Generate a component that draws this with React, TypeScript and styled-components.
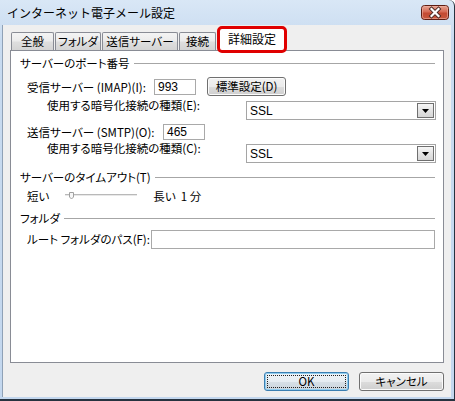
import React from 'react';
import styled, { createGlobalStyle } from 'styled-components';

const GlobalStyle = createGlobalStyle`
  html, body {
    margin: 0;
    padding: 0;
    background: #ffffff;
  }
  body {
    font-family: "Liberation Sans", "Noto Sans CJK JP", sans-serif;
    font-size: 12px;
    color: #000;
  }
`;

// window chrome
const Window = styled.div`
  width: 455px;
  height: 401px;
  box-sizing: border-box;
  display: flex;
  flex-direction: column;
  background: linear-gradient(#d9e7f6, #c8dbf0 40px, #c3d7ee);
  border-right: 1px solid #26323f;
  border-bottom: 2px solid #26323f;
  border-top-right-radius: 6px;
  overflow: hidden;
`;

const TitleBar = styled.div`
  flex: none;
  height: 25px;
  display: flex;
  align-items: center;
  padding: 0 5px 0 7px;
`;

const Title = styled.span`
  flex: 1;
  font-family: "Noto Sans CJK JP", sans-serif;
  font-size: 12px;
  line-height: 14px;
  margin-top: 1px;
`;

const CloseBtn = styled.div`
  width: 28px;
  height: 15px;
  display: flex;
`;

const Client = styled.div`
  flex: 1;
  display: flex;
  flex-direction: column;
  margin: 0 3px 2px 2px;
  border-left: 1px solid #8fa1b6;
  background: #efefef;
`;

// tabs
const TabStrip = styled.div`
  flex: none;
  height: 25px;
  display: flex;
  align-items: flex-end;
  padding-left: 8px;
  position: relative;
  z-index: 1;
`;

const Tab = styled.div<{ $w: number; $gap?: number }>`
  box-sizing: border-box;
  width: ${(p) => p.$w}px;
  height: 18px;
  margin-right: ${(p) => p.$gap ?? 1}px;
  border: 1px solid #898c95;
  border-bottom: none;
  border-radius: 2px 2px 0 0;
  background: linear-gradient(#f4f4f4 0%, #ececec 45%, #dedede 55%, #d4d4d4 100%);
  font-family: "Noto Sans CJK JP", sans-serif;
  font-feature-settings: "palt";
  font-size: 11.5px;
  line-height: 17px;
  text-align: center;
  white-space: nowrap;
`;

const ActiveTab = styled.div<{ $w: number }>`
  box-sizing: border-box;
  width: ${(p) => p.$w}px;
  height: 27px;
  margin-bottom: -3px;
  border: 3px solid #e00000;
  border-radius: 5px;
  background: #ffffff;
  font-family: "Noto Sans CJK JP", sans-serif;
  font-size: 12px;
  line-height: 19px;
  text-align: center;
  white-space: nowrap;
`;

const Panel = styled.div`
  box-sizing: border-box;
  width: 434px;
  height: 313px;
  margin-left: 7px;
  border: 1px solid #898c95;
  background: #ffffff;
  padding: 0 8px 0 9px;
  display: flex;
  flex-direction: column;
`;

const GroupHead = styled.div<{ $mt: number }>`
  display: flex;
  align-items: center;
  gap: 4px;
  height: 14px;
  margin-top: ${(p) => p.$mt}px;
  &::after {
    content: "";
    flex: 1;
    height: 1px;
    background: #a6a6a6;
  }
`;

const Text = styled.span`
  font-family: "Noto Sans CJK JP", sans-serif;
  font-feature-settings: "palt";
  font-size: 11.5px;
  line-height: 14px;
  white-space: nowrap;
`;

const Row = styled.div<{ $mt: number; $h: number; $indent: number; $top?: boolean }>`
  display: flex;
  align-items: ${(p) => (p.$top ? 'flex-start' : 'center')};
  height: ${(p) => p.$h}px;
  margin-top: ${(p) => p.$mt}px;
  padding-left: ${(p) => p.$indent}px;
`;

const Label = styled(Text)<{ $w: number }>`
  flex: none;
  width: ${(p) => p.$w}px;
`;

const TextBox = styled.div<{ $w: number; $h: number }>`
  box-sizing: border-box;
  flex: none;
  width: ${(p) => p.$w}px;
  height: ${(p) => p.$h}px;
  border: 1px solid #a9a9a9;
  background: #fff;
  padding-left: 3px;
  font-family: "Liberation Sans", sans-serif;
  font-size: 12px;
  line-height: ${(p) => p.$h - 2}px;
`;

const Combo = styled.div`
  box-sizing: border-box;
  flex: none;
  width: 190px;
  height: 19px;
  margin-top: 3px;
  border: 1px solid #a5a5a5;
  background: #fff;
  display: flex;
  align-items: center;
  justify-content: space-between;
  padding: 0 1px 0 3px;
  font-family: "Liberation Sans", sans-serif;
  font-size: 12px;
`;

const ComboArrow = styled.div`
  box-sizing: border-box;
  width: 17px;
  height: 15px;
  border: 1px solid #6f6f6f;
  background: linear-gradient(#f6f6f6, #e4e4e4 50%, #d6d6d6);
  display: flex;
  align-items: center;
  justify-content: center;
`;

const Button = styled.div<{ $w: number; $default?: boolean }>`
  box-sizing: border-box;
  flex: none;
  width: ${(p) => p.$w}px;
  height: 19px;
  border: 1px solid ${(p) => (p.$default ? '#3c7fb1' : '#707070')};
  border-radius: 3px;
  background: ${(p) =>
    p.$default
      ? 'linear-gradient(#eef3f7, #e6edf2 50%, #d7e0e7 50%, #cbd5dd)'
      : 'linear-gradient(#f2f2f2, #ebebeb 50%, #dddddd 50%, #cfcfcf)'};
  box-shadow: inset 0 0 0 1px ${(p) => (p.$default ? '#8fcdf0' : '#fbfbfb')};
  font-family: "Noto Sans CJK JP", sans-serif;
  font-feature-settings: "palt";
  font-size: 11.5px;
  line-height: 17px;
  text-align: center;
  position: relative;
  ${(p) =>
    p.$default &&
    `&::before {
      content: "";
      position: absolute;
      inset: 2px;
      border: 1px dotted #222;
    }`}
`;

const SliderRow = styled.div`
  display: flex;
  align-items: center;
  height: 14px;
  margin-top: 5px;
  padding-left: 7px;
`;

const ButtonBar = styled.div`
  display: flex;
  justify-content: flex-end;
  gap: 10px;
  margin-top: 9px;
  padding-right: 7px;
`;

const CloseIcon = () => (
  <svg width="28" height="15" viewBox="0 0 28 15">
    <defs>
      <linearGradient id="cg" x1="0" y1="0" x2="0" y2="1">
        <stop offset="0" stopColor="#e7a897" />
        <stop offset="0.45" stopColor="#d66a55" />
        <stop offset="0.55" stopColor="#c44a33" />
        <stop offset="1" stopColor="#c9593f" />
      </linearGradient>
    </defs>
    <rect x="0.5" y="0.5" width="27" height="14" rx="3" fill="url(#cg)" stroke="#5e1d13" />
    <rect x="1.5" y="1.5" width="25" height="12" rx="2" fill="none" stroke="#eeb3a5" strokeOpacity="0.6" />
    <path d="M10.5 4 L17.5 11 M17.5 4 L10.5 11" stroke="#4a2a26" strokeWidth="4" strokeLinecap="square" />
    <path d="M10.5 4 L17.5 11 M17.5 4 L10.5 11" stroke="#ffffff" strokeWidth="2.2" strokeLinecap="square" />
  </svg>
);

const DownArrow = () => (
  <svg width="7" height="4" viewBox="0 0 7 4">
    <path d="M0 0 H7 L3.5 4 Z" fill="#000" />
  </svg>
);

const Slider = () => (
  <svg width="80" height="10" viewBox="0 0 80 10" style={{ margin: '0 0 0 13px' }}>
    <rect x="3" y="3" width="72" height="1" fill="#b9b9b9" />
    <rect x="3" y="4" width="72" height="1" fill="#e8e8e8" />
    <path d="M7.5 1.5 H11.5 V6 L9.5 8 L7.5 6 Z" fill="#f6f6f6" stroke="#a0a0a0" strokeWidth="1" />
  </svg>
);

export default function App() {
  return (
    <Window>
      <GlobalStyle />
      <TitleBar>
        <Title>インターネット電子メール設定</Title>
        <CloseBtn>
          <CloseIcon />
        </CloseBtn>
      </TitleBar>
      <Client>
        <TabStrip>
          <Tab $w={43}>全般</Tab>
          <Tab $w={46}>フォルダ</Tab>
          <Tab $w={76}>送信サーバー</Tab>
          <Tab $w={37} $gap={1}>接続</Tab>
          <ActiveTab $w={70}>詳細設定</ActiveTab>
        </TabStrip>
        <Panel>
          <GroupHead $mt={5}>
            <Text>サーバーのポート番号</Text>
          </GroupHead>
          <Row $mt={7} $h={19} $indent={7}>
            <Label $w={127}>受信サーバー (IMAP)(I):</Label>
            <TextBox $w={42} $h={16}>993</TextBox>
            <Button $w={79} style={{ marginLeft: 11 }}>標準設定(D)</Button>
          </Row>
          <Row $mt={2} $h={22} $indent={27} $top>
            <Label $w={199}>使用する暗号化接続の種類(E):</Label>
            <Combo>
              SSL
              <ComboArrow>
                <DownArrow />
              </ComboArrow>
            </Combo>
          </Row>
          <Row $mt={3} $h={18} $indent={7}>
            <Label $w={136}>送信サーバー (SMTP)(O):</Label>
            <TextBox $w={42} $h={16}>465</TextBox>
          </Row>
          <Row $mt={0} $h={22} $indent={27} $top>
            <Label $w={199}>使用する暗号化接続の種類(C):</Label>
            <Combo>
              SSL
              <ComboArrow>
                <DownArrow />
              </ComboArrow>
            </Combo>
          </Row>
          <GroupHead $mt={7}>
            <Text>サーバーのタイムアウト(T)</Text>
          </GroupHead>
          <SliderRow>
            <Text>短い</Text>
            <Slider />
            <Text style={{ marginLeft: 11 }}>長い&nbsp;&nbsp;1 分</Text>
          </SliderRow>
          <GroupHead $mt={8}>
            <Text>フォルダ</Text>
          </GroupHead>
          <Row $mt={4} $h={20} $indent={7}>
            <Label $w={124}>ルート フォルダのパス(F):</Label>
            <TextBox $w={284} $h={19} />
          </Row>
        </Panel>
        <ButtonBar>
          <Button $w={85} $default>OK</Button>
          <Button $w={85}>キャンセル</Button>
        </ButtonBar>
      </Client>
    </Window>
  );
}
